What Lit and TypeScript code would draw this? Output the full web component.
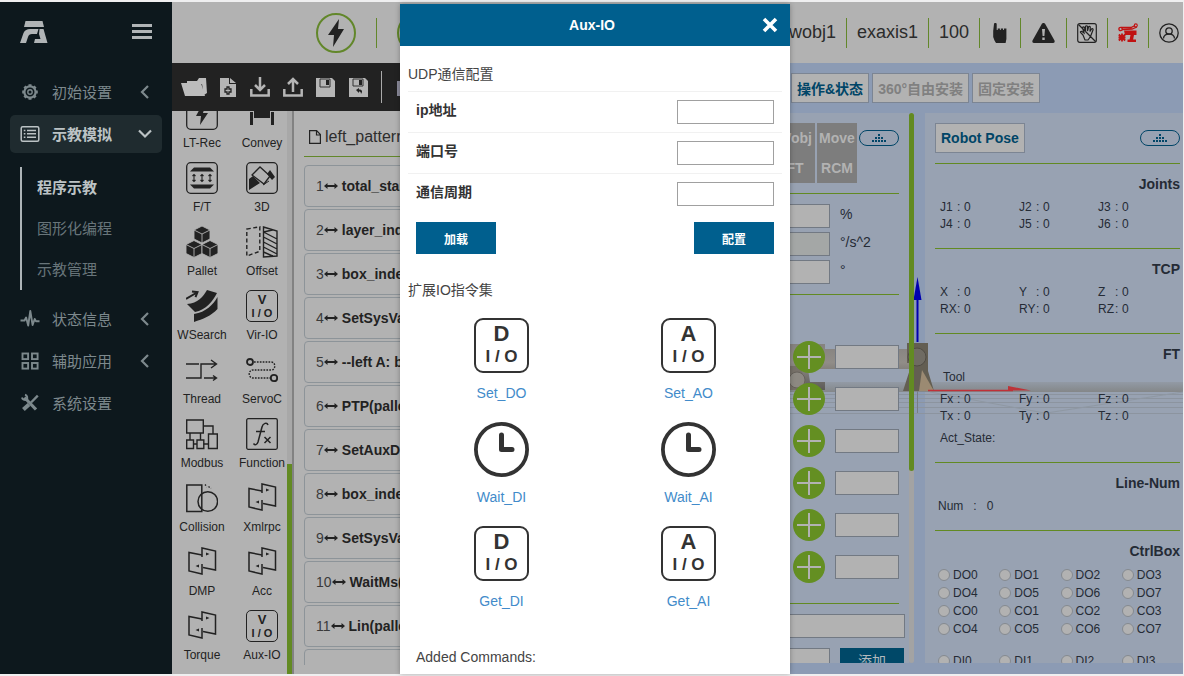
import { LitElement, html, svg, css, nothing } from "lit";
import { customElement, state } from "lit/decorators.js";
import { classMap } from "lit/directives/class-map.js";

/* ---------- icons ---------- */

const navIcons: Record<string, unknown> = {
  gear: svg`<g fill="none" stroke="currentColor"><circle cx="10" cy="10" r="5.6" stroke-width="2.2"/><circle cx="10" cy="10" r="2.2" stroke-width="1.4"/>
    <path stroke-width="3" d="M10 2.2v2.4M10 15.4v2.4M2.2 10h2.4M15.4 10h2.4M4.5 4.5l1.6 1.6M13.9 13.9l1.6 1.6M15.5 4.5l-1.6 1.6M6.1 13.9l-1.6 1.6"/></g>`,
  list: svg`<g fill="none" stroke="currentColor" stroke-width="1.5"><rect x="1.2" y="2.7" width="17.6" height="14.6" rx="1.5"/>
    <path d="M7 6.5h9M7 9.8h9M7 13.2h9M3.8 6.5h1.6M3.8 9.8h1.6M3.8 13.2h1.6"/></g>`,
  pulse: svg`<path fill="none" stroke="currentColor" stroke-width="1.9" stroke-linejoin="round" d="M.5 11.5h4l1.6-3 2.1 8L10.3 2l2.3 14 2.1-6 1.3 2.2h3.5"/>`,
  grid: svg`<g fill="none" stroke="currentColor" stroke-width="1.9"><rect x="2.5" y="2.5" width="5.6" height="5.6"/><rect x="12" y="2.5" width="5.6" height="5.6"/><rect x="2.5" y="12" width="5.6" height="5.6"/><rect x="12" y="12" width="5.6" height="5.6"/></g>`,
  tools: svg`<g fill="none" stroke="currentColor"><path stroke-width="3.2" d="M4.5 4.5l11.500 12"/><path stroke-width="2.4" d="M17.8 2.6L11 9.5"/><path stroke-width="4" d="M9 11.6l-5.6 5"/>
    <path stroke-width="2" d="M2 4.5a3.2 3.2 0 0 0 4.5 2.2A3 3 0 0 0 5 1.8"/></g>`,
};

const puzzle = svg`<g fill="none" stroke="#222" stroke-width="1.5"><path d="M16 11V2l13.5 3v19L17 21.5"/><path d="M16 9L3 6.500V25l13 3V18"/></g>
  <path fill="#222" d="M20 6.5l3.500 1.500-3.500 1.500zM13 18.500L9.500 20l3.500 1.500z"/>`;

const cmdIcons: Record<string, unknown> = {
  rec: svg`<rect x=".7" y=".7" width="30.6" height="30.6" rx="4" fill="none" stroke="#222" stroke-width="1.3"/><path fill="#222" d="M17 5l-7 13h5l-1 9 8-12h-5l3-10z"/>`,
  convey: svg`<path fill="#222" d="M8 12h16v8H8zM4 14h3v13H4zM25 14h3v13h-3z"/>`,
  ft: svg`<rect x=".7" y=".7" width="30.6" height="30.6" rx="4" fill="none" stroke="#222" stroke-width="1.3"/>
    <path fill="#222" d="M8 5.500h16l4 4H4zM8 26.500h16l4-4H4z"/><path fill="none" stroke="#222" stroke-width="1.1" d="M8 12.500v7M16 12.500v7M24 12.500v7M6.500 14L8 12.500 9.500 14M14.500 14l1.500-1.500 1.500 1.500M22.500 14l1.500-1.500 1.500 1.500M6.500 18L8 19.500 9.500 18M14.500 18l1.500 1.500 1.500-1.500M22.500 18l1.500 1.500 1.500-1.500"/>`,
  cam: svg`<rect x=".7" y=".7" width="30.6" height="30.6" rx="4" fill="none" stroke="#222" stroke-width="1.3"/>
    <path fill="none" stroke="#222" stroke-width="1.3" d="M6 13l8-8 10 9-6 8z"/><path fill="#222" d="M3 28V17l4-3 7 7zM21 12l3-4 5 7-3 3z"/><path stroke="#222" fill="none" d="M17 23l6-4"/>`,
  pallet: svg`<g fill="#222" stroke="#b2b2b2" stroke-width=".9" stroke-linejoin="round">${[[16, 0], [8, 14.5], [24, 14.5]].map(
    ([x, y]) => svg`<path d="M${x} ${y}l8 4v9l-8 4-8-4v-9z"/><path fill="none" d="M${x - 8} ${y + 4}l8 4 8-4M${x} ${y + 8}v9"/>`)}</g>`,
  offset: svg`<path fill="none" stroke="#222" stroke-width="1.4" stroke-dasharray="4 2.5" d="M.8 3l13-2.200v24.500L.8 30z"/>
    <path fill="none" stroke="#222" stroke-width="1.4" d="M17.500 1l13.500 4v25l-13.500 1zM17.500 6l9-2M17.500 6L31 13M17.500 11L31 18M17.500 16L31 23M17.500 21L31 28M17.500 26l9 4"/>`,
  weld: svg`<path fill="#222" d="M1 14C12 13 17 7 21 0l10 3C27 11 20 20 9 22zM8 24c12-2 19-9 23.500-17v12C25 26 17 29 8 32z"/><path fill="none" stroke="#222" stroke-width="2" d="M0 9l11-6.500M6 1.500l5.500.7-2 5"/>`,
  thread: svg`<path fill="none" stroke="#222" stroke-width="1.4" d="M0 10h13M0 24h15V10h15M25 6l5.500 4-5.500 4M18 24h12M27 21.500l3.500 2.500-3.500 2.500"/>`,
  servo: svg`<g fill="none" stroke="#222"><g stroke-width="1.8"><circle cx="4" cy="8" r="3"/><circle cx="28" cy="24" r="3.2"/></g><path stroke-width="1.4" stroke-dasharray="1.7 1.2" d="M8 8h17c5 0 5 8 0 8H7c-5 0-5 8 0 8h17"/></g>`,
  modbus: svg`<g fill="none" stroke="#222" stroke-width="1.4"><path d="M.7 2h16.600v13H.7zM.7 22H7.500v8.500H.7zM11 22h6.800v8.500H11zM22.500 16h8.800v14.500h-8.800z"/><path d="M17.300 8H27v8M4 15v7M14.500 15v7M7.500 26H11M17.800 26h4.700"/></g>`,
  func: svg`<g fill="none" stroke="#222"><rect x=".7" y=".7" width="30.6" height="30.6" rx="1.5" stroke-width="1.3"/><path stroke-width="1.5" d="M22 7c-1-3-5-2-6 2l-4 15c-1 3-3 3.500-4.500 1.500M10 13.500h9M18.500 19l6 6M24.500 19l-6 6"/></g>`,
  collision: svg`<g fill="none" stroke="#222" stroke-width="1.5"><path d="M.8 3h15v26.500h-15z"/><circle cx="21.8" cy="19.5" r="9.8"/><path stroke-width="1.4" stroke-dasharray="1.5 1.5" d="M19 2.500l2 2.500M22.500 4.500L25 6.500"/></g>`,
  puzzle,
};

type Cmd = { label: string; icon: string };
const commands: Cmd[] = [
  { label: "LT-Rec", icon: "rec" }, { label: "Convey", icon: "convey" },
  { label: "F/T", icon: "ft" }, { label: "3D", icon: "cam" },
  { label: "Pallet", icon: "pallet" }, { label: "Offset", icon: "offset" },
  { label: "WSearch", icon: "weld" }, { label: "Vir-IO", icon: "V" },
  { label: "Thread", icon: "thread" }, { label: "ServoC", icon: "servo" },
  { label: "Modbus", icon: "modbus" }, { label: "Function", icon: "func" },
  { label: "Collision", icon: "collision" }, { label: "Xmlrpc", icon: "puzzle" },
  { label: "DMP", icon: "puzzle" }, { label: "Acc", icon: "puzzle" },
  { label: "Torque", icon: "puzzle" }, { label: "Aux-IO", icon: "V" },
];

const programLines = ["total_start", "layer_index", "box_index", "SetSysVar", "--left A: box", "PTP(pallet", "SetAuxDO", "box_index", "SetSysVar", "WaitMs(", "Lin(pallet", ""];

const pill = html`<button class="pill" aria-label="展开">
  <svg width="14" height="8" viewBox="0 0 14 8" fill="#004567"><path d="M0 6h2v2H0zM3 6h2v2H3zM6 6h2v2H6zM9 6h2v2H9zM12 6h2v2h-2zM3 3h2v2H3zM6 3h2v2H6zM9 3h2v2H9zM6 0h2v2H6z"/></svg>
</button>`;

/* ---------- sidebar ---------- */

@customElement("side-nav")
class SideNav extends LitElement {
  static styles = css`
    :host { display: block; background: #0d181d; color: #7d898d; }
    .top { display: flex; justify-content: space-between; align-items: center; height: 60px; padding: 0 20px; }
    .burger { background: none; border: 0; padding: 0; display: flex; }
    nav { padding: 11px 10px 0; }
    .item { display: flex; align-items: center; height: 38px; margin-bottom: 4px; padding: 0 9px 0 10px; border-radius: 5px; font-size: 15px; line-height: 20px; color: inherit; text-decoration: none; }
    .item.active { background: #1f2b2f; color: #bcc3c5; font-weight: bold; }
    .label { flex: 1; padding: 2px 0 0 12px; }
    .chev { margin-right: 1px; }
    .sub { list-style: none; margin: 14px 0 10px 10px; padding: 0 0 0 15px; border-left: 2px solid #adb4b7; }
    .sub a { display: block; font-size: 15px; line-height: 41px; color: #68757a; text-decoration: none; }
    .sub .on { color: #bcc3c5; font-weight: bold; }
  `;
  private item(icon: string, label: string, chev: string, active = false) {
    return html`<a href="#" class=${classMap({ item: true, active })}>
      <svg width="20" height="20" viewBox="0 0 20 20">${navIcons[icon]}</svg>
      <span class="label">${label}</span>
      ${chev === "left" ? html`<svg class="chev" width="14" height="14" viewBox="0 0 14 14"><path d="M10 1L4 7l6 6" fill="none" stroke="currentColor" stroke-width="2.2"/></svg>` : nothing}
      ${chev === "down" ? html`<svg class="chev" width="14" height="14" viewBox="0 0 14 14"><path d="M1 3.5l6 6 6-6" fill="none" stroke="currentColor" stroke-width="2.2"/></svg>` : nothing}
    </a>`;
  }
  render() {
    return html`
      <div class="top">
        <svg width="28" height="23" viewBox="0 0 28 23" fill="#b0b4b6"><path d="M5.500 0h17l1.500 6H4zM0 22L3.500 12C5 9 7 8 10 8h8.500L17 13h-5c-2 0-3.500 1-4 3l-2 6zM19.500 8h4L27.500 22H14l1-4h5.500L19 13z"/></svg>
        <button class="burger" aria-label="菜单"><svg width="20" height="16" viewBox="0 0 20 16" fill="#b0b4b6"><path d="M0 0h20v3H0zM0 6h20v3H0zM0 12h20v3H0z"/></svg></button>
      </div>
      <nav>
        ${this.item("gear", "初始设置", "left")}
        ${this.item("list", "示教模拟", "down", true)}
        <ul class="sub">
          <li><a href="#" class="on">程序示教</a></li>
          <li><a href="#">图形化编程</a></li>
          <li><a href="#">示教管理</a></li>
        </ul>
        ${this.item("pulse", "状态信息", "left")}
        ${this.item("grid", "辅助应用", "left")}
        ${this.item("tools", "系统设置", "")}
      </nav>`;
  }
}

/* ---------- header ---------- */

@customElement("top-bar")
class TopBar extends LitElement {
  static styles = css`
    :host { display: flex; justify-content: space-between; align-items: center; height: 61px; background: #b2b2b2; color: #2b2b2b; font-size: 18px; }
    .left, .right { display: flex; align-items: center; }
    .left { padding-left: 144px; gap: 20px; }
    .right { padding-right: 4px; gap: 10px; }
    .bar { width: 1px; height: 30px; background: #62872a; }
    .ring { box-sizing: border-box; width: 40px; height: 40px; padding: 0; border: 2px solid #62872a; border-radius: 50%; background: none; display: grid; place-items: center; }
    .icon { display: block; }
  `;
  render() {
    return html`
      <div class="left">
        <button class="ring" aria-label="使能"><svg width="18" height="28" viewBox="0 0 18 28"><path fill="#222" d="M12 0L1 16h6l-1 12L17 10h-6z"/></svg></button>
        <span class="bar"></span>
        <button class="ring" aria-label="启动"></button>
      </div>
      <div class="right">
        <span>wobj1</span><span class="bar"></span>
        <span>exaxis1</span><span class="bar"></span>
        <span>100</span><span class="bar"></span>
        <svg class="icon" width="20" height="20" viewBox="0 0 20 20"><path fill="#222" d="M4 1c0-1.300 2.700-1.300 2.700 0v6h1V5.500h2.200V7h.9V5.500H13V7h.9V5.500h2.500V16l-.8 4H6l-1.500-2.500L3.200 14V8z"/></svg>
        <span class="bar"></span>
        <svg class="icon" width="25" height="20" viewBox="0 0 25 20"><path fill="#222" d="M12.500 0c1 0 1.500.5 2 1.500l9 16c.5 1.500 0 2.500-1.500 2.500H3c-1.500 0-2-1-1.500-2.500l9-16c.5-1 1-1.500 2-1.500z"/><path fill="#b2b2b2" d="M11 6h3l-.6 7h-1.800zM11.300 14.500h2.400v2.400h-2.400z"/></svg>
        <span class="bar"></span>
        <svg class="icon" width="20" height="20" viewBox="0 0 20 20" fill="none" stroke="#222" stroke-width="1.2"><rect x=".7" y=".7" width="18.6" height="18.6" rx="2"/><path d="M1.500 1.500l17 17M6 12L3.500 9.500c-.5-1 1-1.500 1.500-1l2 1.500L5.500 5c0-1.300 1.500-1.500 2-.3L8.500 8V3.500c.3-1 1.700-1 2 0V8l1-4c.5-1 1.800-.7 1.800.4L13 8.500 14.500 6c.8-.8 1.900 0 1.500 1l-2.500 6.500L11 17H8z"/></svg>
        <span class="bar"></span>
        <svg class="icon" width="20" height="20" viewBox="0 0 20 20" fill="none" stroke="#c01212"><path stroke-width="1.3" d="M3 4.500h10L17 2.500M4 6.500l10-.5 5-2"/><circle cx="2.6" cy="6" r="1.7" stroke-width="1.3"/><circle cx="17.8" cy="2.4" r="1.5" stroke-width="1.1"/><path fill="#c01212" stroke="none" d="M6 7.500h12.500v4.500H16l-1 5h-3.500l1-5H7zM9.500 16.500H18V19H9.500z"/><path stroke-width="1.8" d="M.8 11.500l6.400 6M7.200 11.500l-6.400 6M4 10.500v8M.5 14.500h7"/></svg>
        <span class="bar"></span>
        <svg class="icon" width="20" height="20" viewBox="0 0 20 20" fill="none" stroke="#222" stroke-width="1.3"><circle cx="10" cy="10" r="9.2"/><circle cx="10" cy="8" r="3.2"/><path d="M4.500 15.500c0-6 11-6 11 0"/></svg>
      </div>`;
  }
}

/* ---------- program editor ---------- */

@customElement("program-editor")
class ProgramEditor extends LitElement {
  static styles = css`
    :host { display: flex; flex-direction: column; min-width: 0; min-height: 0; overflow: hidden; background: #b2b2b2; }
    .tools { flex: none; display: flex; align-items: center; height: 48px; padding: 0 9px; gap: 12px; background: #222; }
    .tools button { flex: none; width: 21px; height: 20px; padding: 0; border: 0; background: none; display: grid; place-items: center; }
    .tools .wide { width: 26px; }
    .tools .slim { width: 18px; }
    .sep { flex: none; width: 1px; height: 32px; background: #aaa; }
    .cols { flex: 1; display: flex; min-height: 0; }
    .cmds { flex: none; width: 115px; overflow: hidden; }
    .grid { display: grid; grid-template-columns: 60px 60px; grid-auto-rows: 64px; margin-top: -13px; }
    .cmd { padding: 0; border: 0; background: none; display: flex; flex-direction: column; align-items: center; gap: 5px; font: 12px/16px "Liberation Sans", Arial, sans-serif; color: #222; }
    .io { box-sizing: border-box; width: 32px; height: 32px; border: 1px solid #222; border-radius: 5px; display: flex; flex-direction: column; align-items: center; justify-content: center; font-weight: bold; font-size: 13px; line-height: 14px; }
    .io small { font-size: 11px; line-height: 13px; }
    .track { flex: none; width: 5px; background: #a8a8a8; border-right: 2px solid #828282; display: flex; align-items: flex-end; }
    .thumb { width: 5px; height: 210px; background: #628a22; }
    .list { flex: 1; min-width: 0; overflow: hidden; margin: 0 10px 9px; }
    .file { display: flex; align-items: center; gap: 4px; height: 46px; padding: 6px 0 0 5px; box-sizing: border-box; border-bottom: 1px solid #62872a; margin-bottom: 8px; font-size: 16px; color: #2d2d2d; }
    .line { display: flex; align-items: center; height: 42px; box-sizing: border-box; margin-bottom: 2px; padding-left: 11px; border: 1px solid #8d9499; border-radius: 4px; font-size: 14px; color: #222; white-space: nowrap; }
    .line b { padding-left: 4px; }
    .line span { color: #3a3a3a; }
  `;
  render() {
    return html`
      <div class="tools">
        <button class="wide" aria-label="打开"><svg width="26" height="18" viewBox="0 0 26 18" fill="#bcbcbc"><path d="M6 3h10l2-3h7l1 15-3 2-2-11H6zM0 5h20l4 13H4z"/></svg></button>
        <button class="slim" aria-label="新建"><svg width="16" height="19" viewBox="0 0 16 19"><path fill="#b5b5b5" d="M0 0h9v6h7v13H0zM10 0l6 5h-6z"/><path fill="none" stroke="#222" stroke-width="1.3" d="M7 9h2v2h2v3H9v2H7v-2H5v-3h2z"/></svg></button>
        <button aria-label="导入"><svg width="20" height="20" viewBox="0 0 20 20" fill="none" stroke="#b5b5b5" stroke-width="2.5"><path d="M1.300 12v6.500h17.400V12M10 0v13M5 8l5 5 5-5"/></svg></button>
        <button aria-label="导出"><svg width="20" height="20" viewBox="0 0 20 20" fill="none" stroke="#b5b5b5" stroke-width="2.5"><path d="M1.300 12v6.500h17.400V12M10 15V2M5 7l5-5 5 5"/></svg></button>
        <button aria-label="保存"><svg width="19" height="19" viewBox="0 0 19 19"><path fill="#b5b5b5" d="M0 0h16l3 3v16H0z"/><path fill="none" stroke="#333" d="M4 1h10v8H4z"/><path fill="#222" d="M10 2h3v5h-3z"/></svg></button>
        <button aria-label="另存为"><svg width="19" height="19" viewBox="0 0 19 19"><path fill="#b5b5b5" d="M0 0h16l3 3v16H0z"/><path fill="none" stroke="#333" d="M4 1h10v7H4z"/><path fill="#222" d="M10 2h3v5h-3zM7 12l3-2v1.500c3 0 4 2 2 4.500 0-2-1-2.500-2-2.500V15z"/></svg></button>
        <span class="sep"></span>
        <button aria-label="复制"><svg width="16" height="18" viewBox="0 0 16 18"><path fill="#8a8a9a" d="M0 3h16v15H0z"/></svg></button>
      </div>
      <div class="cols">
        <div class="cmds"><div class="grid">
          ${commands.map(c => html`<button class="cmd">
            ${c.icon === "V"
              ? html`<span class="io">V<small>I / O</small></span>`
              : html`<svg width="32" height="32" viewBox="0 0 32 32">${cmdIcons[c.icon]}</svg>`}
            <span>${c.label}</span></button>`)}
        </div></div>
        <div class="track"><div class="thumb"></div></div>
        <div class="list">
          <div class="file"><svg width="12" height="14" viewBox="0 0 12 14" fill="none" stroke="#222" stroke-width="1.2"><path d="M.6.6h7l3.800 4v8.800H.6zM7.500.6V5h4"/></svg>left_pattern.lua</div>
          ${programLines.map((t, i) => html`<div class="line">${t ? html`<span>${i + 1}</span>
            <svg width="14" height="8" viewBox="0 0 14 8"><path fill="#222" d="M0 4l3.500-3v2h7V1L14 4l-3.500 3V5h-7v2z"/></svg><b>${t}</b>` : nothing}</div>`)}
        </div>
      </div>`;
  }
}

/* ---------- robot status ---------- */

const axisRow = (names: string[]) => html`<div class="vals">${names.map(n => html`<span class="val"><span>${n}</span><span>:</span><span>0</span></span>`)}</div>`;

@customElement("robot-status")
class RobotStatus extends LitElement {
  static styles = css`
    :host { display: flex; flex-direction: column; min-height: 0; background: #8c9bb4; color: #252b35; font-size: 14px; }
    button, input { font-family: inherit; margin: 0; box-sizing: border-box; }
    .modes { flex: none; display: flex; gap: 3px; padding: 10px 16px; }
    .modes button, .pose-btn { height: 30px; padding: 0 5px; border: 1px solid #7c8593; background: #b2b2b2; font-size: 14px; font-weight: bold; color: #808080; white-space: nowrap; }
    .modes .on, .pose-btn { color: #004567; }
    .panels { flex: 1; display: flex; min-height: 0; margin-bottom: 11px; position: relative; overflow: hidden; isolation: isolate; }
    .scene { position: absolute; left: 0; top: 0; z-index: 0; }
    .ops { flex: none; width: 134px; background: #98a2b2; }
    .inner { position: relative; z-index: 1; }
    .track { flex: none; width: 5px; margin-right: 11px; background: #a3a3a3; border-radius: 3px; position: relative; z-index: 1; }
    .thumb { height: 358px; border-radius: 3px; background: #628a22; }
    .tabs { display: flex; align-items: flex-start; gap: 2px; padding: 10px 10px 10px 0; border: 0; }
    .tab { width: 40px; height: 60px; padding: 0; border: 0; background: #7d7d7d; color: #b2b2b2; font-size: 14px; font-weight: bold; line-height: 30px; text-align: center; }
    .pill { width: 40px; height: 16px; margin-top: 7px; padding: 0; border: 1px solid #004567; border-radius: 8px; background: #98a2b2; display: grid; place-items: center; }
    .rule { height: 1px; margin-right: 10px; background: #628a22; }
    .field { width: 55px; height: 24px; padding: 0 4px; border: 1px solid #727983; border-radius: 0; background: #b2b2b2; display: block; }
    .field.off { background: #a4a7a6; }
    .params { display: grid; gap: 4px; padding: 10px 0; }
    .params label { display: flex; gap: 10px; line-height: 20px; }
    .steps { display: grid; gap: 10px; padding: 46px 10px 20px 0; }
    .step { display: flex; justify-content: flex-end; align-items: center; gap: 10px; }
    .step .field { width: 64px; }
    .plus { width: 32px; height: 32px; padding: 0; border: 0; border-radius: 50%; background: #648f22; display: grid; place-items: center; }
    .long { width: 130px; margin: 10px 0; }
    .last { display: flex; gap: 10px; }
    .add { width: 64px; height: 24px; border: 0; padding: 0; background: #004868; color: #b2b9bd; font-size: 14px; }
    .pose { flex: 1; background: #98a2b2; padding: 0 3px 0 10px; min-width: 0; }
    .head { display: flex; justify-content: space-between; padding: 10px 0; border-bottom: 1px solid #628a22; }
    section { border-bottom: 1px solid #628a22; padding: 10px 0 15px; }
    section:last-child { border: 0; }
    h3 { margin: 0 0 5px; font-size: 14px; line-height: 20px; text-align: right; }
    .vals, .text { font-size: 12px; line-height: 17px; padding-left: 5px; }
    .vals { display: grid; grid-template-columns: repeat(3, 79px); }
    .val { display: grid; grid-template-columns: 17px 7px auto; }
    .tool { padding-left: 8px; margin-bottom: 5px; }
    .act { margin-top: 5px; }
    .num { display: flex; gap: 10px; padding-left: 3px; }
    .ios { display: grid; grid-template-columns: repeat(4, 1fr); grid-auto-rows: 18px; margin: 0 -3px 14px 3px; font-size: 12px; }
    .ios label { display: flex; align-items: center; gap: 3px; }
    .ios input { appearance: none; width: 12px; height: 12px; border: 1px solid #858a90; border-radius: 50%; background: #b2b2b2; }
  `;
  private ios(names: string[]) {
    return html`<div class="ios">${names.map(n => html`<label><input type="radio" name=${n} />${n}</label>`)}</div>`;
  }
  render() {
    return html`
      <div class="modes"><button class="on">操作&amp;状态</button><button>360°自由安装</button><button>固定安装</button></div>
      <div class="panels">
        <div class="ops"><div class="inner">
          <div class="tabs">
            <button class="tab">Wobj<br />FT</button><button class="tab">Move<br />RCM</button>${pill}
          </div>
          <div class="rule"></div>
          <div class="params">
            <label><input class="field" type="text" />%</label>
            <label><input class="field off" type="text" />°/s^2</label>
            <label><input class="field" type="text" />°</label>
          </div>
          <div class="rule"></div>
          <div class="steps">${[1, 2, 3, 4, 5, 6].map(j => html`<div class="step">
            <button class="plus" aria-label="J${j}+"><svg width="24" height="24" viewBox="0 0 24 24"><path stroke="#b2b2b2" stroke-width="2" d="M12 0v24M0 12h24"/></svg></button>
            <input class="field" type="text" aria-label="J${j}" /></div>`)}</div>
          <div class="rule"></div>
          <input class="field long" type="text" aria-label="点名称" />
          <div class="last"><input class="field" type="text" aria-label="名称" /><button class="add">添加</button></div>
        </div></div>
        <div class="track"><div class="thumb"></div></div>
        <div class="pose"><div class="inner">
          <div class="head"><button class="pose-btn">Robot Pose</button>${pill}</div>
          <section><h3>Joints</h3>${axisRow(["J1", "J2", "J3"])}${axisRow(["J4", "J5", "J6"])}</section>
          <section><h3>TCP</h3>${axisRow(["X", "Y", "Z"])}${axisRow(["RX", "RY", "RZ"])}</section>
          <section><h3>FT</h3><div class="text tool">Tool</div>${axisRow(["Fx", "Fy", "Fz"])}${axisRow(["Tx", "Ty", "Tz"])}<div class="text act">Act_State:</div></section>
          <section><h3>Line-Num</h3><div class="text num"><span>Num</span><span>:</span><span>0</span></div></section>
          <section><h3>CtrlBox</h3>
            ${this.ios(["DO0", "DO1", "DO2", "DO3", "DO4", "DO5", "DO6", "DO7", "CO0", "CO1", "CO2", "CO3", "CO4", "CO5", "CO6", "CO7"])}
            ${this.ios(["DI0", "DI1", "DI2", "DI3"])}
          </section>
        </div></div>
        <svg class="scene" width="408" height="310" viewBox="775 113 408 310" aria-hidden="true">
          <defs>
            <linearGradient id="arm" x1="0" y1="0" x2="0" y2="1"><stop offset="0" stop-color="#85827f"/><stop offset=".4" stop-color="#918d88"/><stop offset="1" stop-color="#5c5a57"/></linearGradient>
            <linearGradient id="floor" x1="0" y1="0" x2="0" y2="1"><stop offset="0" stop-color="#929aa5"/><stop offset="1" stop-color="#848789"/></linearGradient>
          </defs>
          <path fill="url(#floor)" d="M775 382h408v10H775z"/>
          <path stroke="#8c949f" d="M775 394.500h408M775 398.500h408M775 402.500h408M775 407.500h408M775 413.500h408"/>
          <path stroke="#8f98a3" d="M930 392l120 22M1183 392L1040 414"/>
          <path fill="url(#arm)" d="M775 344h50v46h-50zM820 349h92v20h-92z"/>
          <path fill="#98a2b2" d="M808 369h99l-5 13h-92z"/>
          <path fill="#777169" d="M775 366h25l8 24h-33z"/><circle cx="797" cy="380" r="8" fill="#8d8982" stroke="#67625b"/>
          <path fill="#635e52" d="M907 343h21v28l6 20h-31l9-28h-5z"/><circle cx="917" cy="357" r="9" fill="#6f6b62" stroke="#504c44"/>
          <path fill="#9b8a72" d="M922 370l12 21h-15z"/><path stroke="#777d85" d="M917.500 391v22"/>
          <path stroke="#0000ae" stroke-width="2" d="M917.500 342v-45"/><path fill="#0000ae" d="M917.500 277l4 23h-8z"/>
          <path stroke="#c03038" stroke-width="1.5" d="M928 390.500h85"/><path fill="#bc3338" d="M1008 386l23 4.500h-23z"/>
        </svg>
      </div>`;
  }
}

/* ---------- Aux-IO dialog ---------- */

@customElement("aux-io-dialog")
class AuxIoDialog extends LitElement {
  static styles = css`
    :host { display: block; width: 390px; background: #fff; color: #333; font-size: 14px; line-height: 20px; box-shadow: 0 0 5px rgba(0, 0, 0, 0.3); overflow: hidden; }
    header { display: flex; align-items: center; height: 42px; padding: 0 12px; background: #005f8e; color: #fff; }
    h1 { flex: 1; margin: 0; padding-left: 10px; text-align: center; font-size: 14px; }
    .close { display: flex; padding: 0; border: 0; background: none; }
    .body { padding: 18px 8px 0; }
    h2 { margin: 0; font-size: 14px; font-weight: normal; color: #444; }
    form { margin: 7px 0 0; }
    .row { display: flex; align-items: center; justify-content: space-between; box-sizing: border-box; height: 41px; padding: 0 8px; border-top: 1px solid #f1f1f1; }
    .row label { font-weight: bold; padding-bottom: 4px; }
    .row input { box-sizing: border-box; width: 97px; height: 24px; border: 1px solid #a0a0a0; border-radius: 0; font: inherit; padding: 0 4px; }
    .actions { display: flex; justify-content: space-between; padding: 8px 8px 26px; }
    .actions button { width: 80px; height: 32px; border: 0; background: #005f8e; color: #fff; font-family: inherit; font-size: 12px; font-weight: bold; }
    .grid { display: grid; grid-template-columns: 1fr 1fr; grid-auto-rows: 104px; padding-top: 18px; }
    .cell { display: flex; flex-direction: column; align-items: center; gap: 10px; color: #428bca; text-decoration: none; }
    .io { box-sizing: border-box; width: 55px; height: 55px; border: 2px solid #333; border-radius: 9px; color: #333; display: flex; flex-direction: column; align-items: center; justify-content: center; font-weight: bold; font-size: 22px; line-height: 22px; }
    .io small { font-size: 17px; line-height: 24px; }
    .added { padding: 17px 8px 0; color: #444; }
  `;
  private box(letter: string) { return html`<span class="io">${letter}<small>I / O</small></span>`; }
  private clock() {
    return html`<svg width="55" height="55" viewBox="0 0 55 55" fill="none" stroke="#333"><circle cx="27.5" cy="27.5" r="25.6" stroke-width="3.8"/><path stroke-width="5" stroke-linecap="round" stroke-linejoin="round" d="M27.500 13v14.500H38"/></svg>`;
  }
  render() {
    const cells: [string, unknown][] = [["Set_DO", this.box("D")], ["Set_AO", this.box("A")], ["Wait_DI", this.clock()], ["Wait_AI", this.clock()], ["Get_DI", this.box("D")], ["Get_AI", this.box("A")]];
    return html`
      <header><h1>Aux-IO</h1><button class="close" aria-label="关闭"><svg width="16" height="16" viewBox="0 0 16 16"><path stroke="#fff" stroke-width="3.6" d="M2 2l12 12M14 2L2 14"/></svg></button></header>
      <div class="body">
        <h2>UDP通信配置</h2>
        <form>
          ${["ip地址", "端口号", "通信周期"].map((l, i) => html`<div class="row"><label for="f${i}">${l}</label><input id="f${i}" type="text" /></div>`)}
          <div class="actions"><button type="button">加载</button><button type="button">配置</button></div>
        </form>
        <h2>扩展IO指令集</h2>
        <div class="grid">${cells.map(([t, ic]) => html`<a class="cell" href="#">${ic}<span>${t}</span></a>`)}</div>
        <div class="added">Added Commands:</div>
      </div>`;
  }
}

@customElement("app-root")
class AppRoot extends LitElement {
  @state() private dialogOpen = true;
  static styles = css`
    :host { display: block; box-sizing: border-box; height: 100vh; padding: 2px 1px 2px 0; background: #efeff0; font-family: "Liberation Sans", Arial, "Noto Sans CJK SC", sans-serif; position: relative; }
    .app { display: grid; grid-template-columns: 172px minmax(0, 1fr); height: 100%; overflow: hidden; }
    .main { display: flex; flex-direction: column; min-height: 0; }
    .work { flex: 1; display: grid; grid-template-columns: minmax(0, 1fr) 408px; grid-template-rows: minmax(0, 1fr); min-height: 0; }
    .layer { position: absolute; inset: 4px 0 2px 6px; z-index: 2; display: flex; justify-content: center; }
  `;
  render() {
    return html`
      <div class="app">
        <side-nav></side-nav>
        <div class="main">
          <top-bar></top-bar>
          <div class="work"><program-editor></program-editor><robot-status></robot-status></div>
        </div>
      </div>
      ${this.dialogOpen ? html`<div class="layer"><aux-io-dialog role="dialog" aria-label="Aux-IO"></aux-io-dialog></div>` : nothing}`;
  }
}
